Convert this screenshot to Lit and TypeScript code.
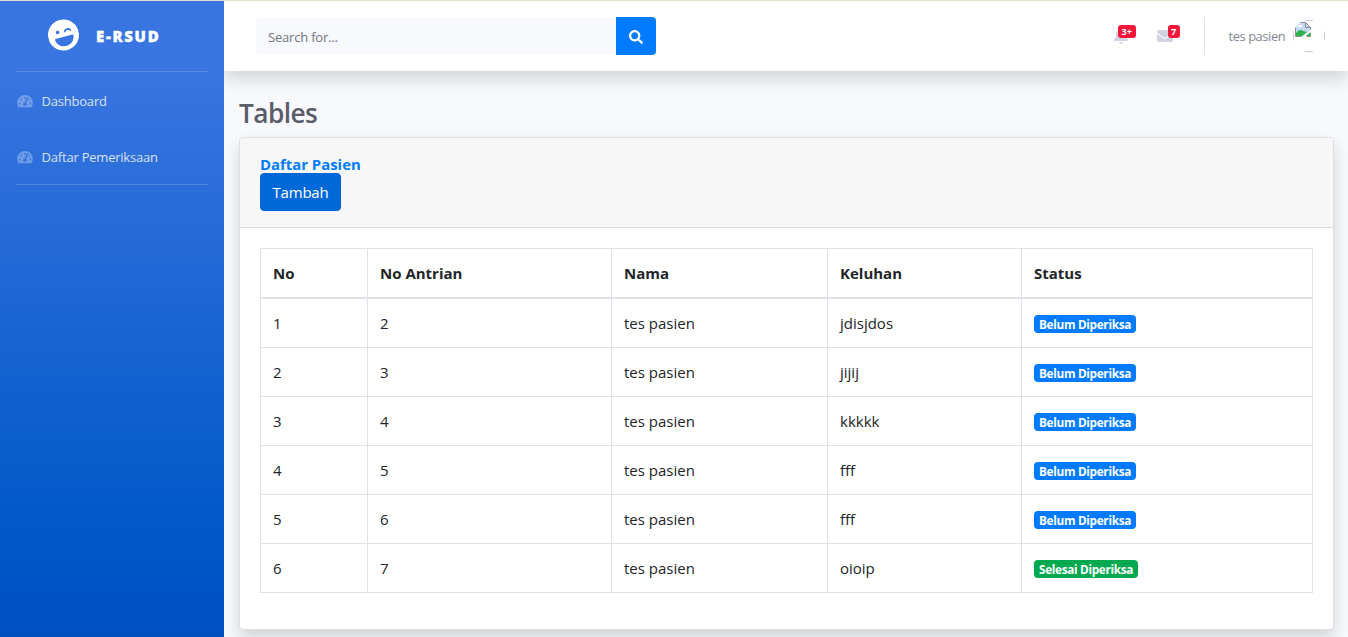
import { LitElement, html, css, svg } from "lit";
import { customElement, property } from "lit/decorators.js";
import { classMap } from "lit/directives/class-map.js";

const icons = {
  search: { box: "0 0 512 512", d: "M505 442.7L405.3 343c-4.5-4.5-10.6-7-17-7H372c27.6-35.3 44-79.7 44-128C416 93.1 322.9 0 208 0S0 93.1 0 208s93.1 208 208 208c48.3 0 92.7-16.4 128-44v16.3c0 6.4 2.5 12.5 7 17l99.7 99.7c9.4 9.4 24.6 9.4 33.9 0l28.3-28.3c9.4-9.4 9.4-24.6.1-34zM208 336c-70.7 0-128-57.2-128-128 0-70.7 57.2-128 128-128 70.7 0 128 57.2 128 128 0 70.7-57.2 128-128 128z" },
  bell: { box: "0 0 448 512", d: "M224 512c35.32 0 63.97-28.65 63.97-64H160.03c0 35.35 28.65 64 63.97 64zm215.39-149.71c-19.32-20.76-55.47-51.99-55.47-154.29 0-77.7-54.48-139.9-127.94-155.16V32c0-17.67-14.32-32-31.98-32s-31.98 14.33-31.98 32v20.84C118.56 68.1 64.08 130.3 64.08 208c0 102.3-36.15 133.53-55.47 154.29-6 6.45-8.66 14.16-8.61 21.71.11 16.4 12.98 32 32.1 32h383.8c19.12 0 32-15.6 32.1-32 .05-7.55-2.61-15.27-8.61-21.71z" },
  envelope: { box: "0 0 512 512", d: "M502.3 190.8c3.9-3.1 9.7-.2 9.7 4.7V400c0 26.5-21.5 48-48 48H48c-26.5 0-48-21.5-48-48V195.6c0-5 5.7-7.8 9.7-4.7 22.4 17.4 52.1 39.5 154.1 113.6 21.1 15.4 56.7 47.8 92.2 47.6 35.7.3 72-32.8 92.3-47.6 102-74.1 131.6-96.3 154-113.7zM256 320c23.2.4 56.6-29.2 73.4-41.4 132.7-96.3 142.8-104.7 173.4-128.7 5.8-4.5 9.2-11.5 9.2-18.9v-19c0-26.5-21.5-48-48-48H48c-26.5 0-48 21.5-48 48v19c0 7.4 3.4 14.3 9.2 18.9 30.6 23.9 40.7 32.4 173.4 128.7 16.8 12.2 50.2 41.8 73.4 41.4z" },
  gauge: { box: "0 0 576 512", d: "M288 32C128.94 32 0 160.94 0 320c0 52.8 14.25 102.26 39.06 144.8 5.61 9.62 16.3 15.2 27.44 15.2h443c11.14 0 21.83-5.58 27.44-15.2C561.75 422.26 576 372.8 576 320c0-159.06-128.94-288-288-288zm0 64c14.71 0 26.58 10.13 30.32 23.65-1.11 2.26-2.64 4.23-3.45 6.67l-9.22 27.67c-5.13 3.49-10.97 6.01-17.64 6.01-17.67 0-32-14.33-32-32S270.33 96 288 96zM96 384c-17.67 0-32-14.33-32-32s14.33-32 32-32 32 14.33 32 32-14.33 32-32 32zm48-160c-17.67 0-32-14.33-32-32s14.33-32 32-32 32 14.33 32 32-14.33 32-32 32zm246.77-72.41l-61.33 184C343.13 347.33 352 364.54 352 384c0 11.72-3.38 22.55-8.88 32H232.88c-5.5-9.45-8.88-20.28-8.88-32 0-33.94 26.5-61.43 59.9-63.59l61.34-184.01c4.17-12.56 17.73-19.45 30.36-15.17 12.57 4.19 19.35 17.79 15.17 30.36zm14.66 57.2l15.52-46.55c3.47-1.29 7.13-2.23 11.05-2.23 17.67 0 32 14.33 32 32s-14.33 32-32 32c-11.38-.01-20.89-6.28-26.57-15.22zM480 384c-17.67 0-32-14.33-32-32s14.33-32 32-32 32 14.33 32 32-14.33 32-32 32z" },
  wink: { box: "0 0 496 512", d: "M248 8C111 8 0 119 0 256s111 248 248 248 248-111 248-248S385 8 248 8zm20.1 198c4-25.2 34.2-42.1 59.9-42.1s55.9 16.9 59.9 42.1c1.7 11.1-11.4 18.3-19.8 10.8l-9.5-8.5c-14.8-13.2-46.2-13.2-61 0L288 217c-8.4 7.4-21.6.3-19.9-11zM168 164c15.5 0 28 12.5 28 28s-12.5 28-28 28-28-12.5-28-28 12.5-28 28-28zM111 286h274c9 0 16 7.6 15 16-8 72-66 134-137 134h-29c-72 0-130-62-138-134-1-8.4 6-16 15-16z" },
};

@customElement("fa-icon")
class FaIcon extends LitElement {
  @property() name: keyof typeof icons = "search";
  static styles = css`
    :host { display: block; line-height: 0; }
    .glyph { display: block; width: 100%; height: 100%; fill: currentColor; fill-rule: evenodd; }
  `;
  render() {
    const i = icons[this.name];
    return html`<svg class="glyph" viewBox=${i.box}>${svg`<path d=${i.d}></path>`}</svg>`;
  }
}

@customElement("side-bar")
class SideBar extends LitElement {
  static styles = css`
    :host { display: block; width: 224px; flex: none; background: linear-gradient(180deg, #3975e0 10%, #0057c8 85%, #0050c2 100%); color: #fff; }
    .brand { display: flex; align-items: center; height: 70px; padding-left: 48px; box-sizing: border-box; gap: 17px; }
    .face { width: 31px; height: 32px; transform: rotate(-15deg); margin-top: -2px; }
    .title { font-size: 15px; font-weight: 800; letter-spacing: 1.7px; line-height: 22px; -webkit-text-stroke: 0.35px #fff; }
    .rule { height: 1px; margin: 0 16px; background: rgba(255, 255, 255, 0.17); }
    .item { display: flex; align-items: center; gap: 8px; height: 56px; padding: 0 17px; box-sizing: border-box; font-size: 13px; color: rgba(255, 255, 255, 0.82); letter-spacing: -0.22px; }
    .items { padding: 1px 0 0; height: 112px; box-sizing: border-box; }
    .item span { margin-left: 0.6px; }
    .gauge { width: 16px; height: 14px; color: rgba(255, 255, 255, 0.3); }
  `;
  render() {
    return html`
      <div class="brand"><fa-icon class="face" name="wink"></fa-icon><span class="title">E-RSUD</span></div>
      <div class="rule"></div>
      <div class="items">
        ${["Dashboard", "Daftar Pemeriksaan"].map((t) => html`<div class="item"><fa-icon class="gauge" name="gauge"></fa-icon><span>${t}</span></div>`)}
      </div>
      <div class="rule"></div>
    `;
  }
}

@customElement("top-bar")
class TopBar extends LitElement {
  static styles = css`
    :host { display: flex; align-items: center; height: 70px; flex: none; background: #fff; box-shadow: 0 8px 16px rgba(0, 0, 0, 0.15); padding: 0 23px 0 32px; box-sizing: border-box; color: #858796; }
    .field { width: 360px; height: 38px; box-sizing: border-box; padding: 1px 12px 0; border: 0; border-radius: 4px 0 0 4px; background: #f8f9fc; display: flex; align-items: center; font-size: 13px; letter-spacing: -0.2px; color: #6e757e; }
    .go { width: 40px; height: 38px; border-radius: 0 4px 4px 0; background: #007bff; color: #fff; display: flex; align-items: center; justify-content: center; }
    .lens { width: 14px; height: 14px; margin-top: 1px; }
    .spacer { flex: 1; }
    .alert { position: relative; color: #d1d3e2; }
    .bell { width: 14px; height: 16px; margin-right: 29px; }
    .bell fa-icon { width: 14px; height: 16px; }
    .mail { width: 16px; height: 16px; margin-right: 31px; }
    .mail fa-icon { width: 16px; height: 16px; }
    .count { position: absolute; left: 4px; top: -3px; height: 13px; box-sizing: border-box; padding: 0 3.6px; border-radius: 3px; background: #f6183a; color: #fff; font-size: 9.2px; line-height: 14px; font-weight: 700; white-space: nowrap; }
    .mail .count { left: 10.5px; top: -3px; }
    .divider { width: 1px; height: 38px; background: #e0e4ef; margin-right: 23.5px; }
    .user { font-size: 12.9px; letter-spacing: -0.42px; width: 64.5px; white-space: nowrap; }
    .avatar { width: 32px; height: 32px; border-radius: 50%; overflow: hidden; }
    .frame { width: 32px; height: 32px; box-sizing: border-box; border: 1px solid #c4c4d4; padding: 0 1px; }
    .broken { display: block; width: 16px; height: 16px; }
  `;
  render() {
    return html`
      <div class="field">Search for...</div>
      <div class="go"><fa-icon class="lens" name="search"></fa-icon></div>
      <div class="spacer"></div>
      <div class="alert bell"><fa-icon name="bell"></fa-icon><span class="count">3+</span></div>
      <div class="alert mail"><fa-icon name="envelope"></fa-icon><span class="count">7</span></div>
      <div class="divider"></div>
      <span class="user">tes pasien</span>
      <div class="avatar"><div class="frame">
        <svg class="broken" viewBox="0 0 16 16">
          <path d="M.5 1.5H10.5L15.5 6.5V9L8 15.5H.5z" fill="#c3d9f7"></path>
          <path d="M1 15V12C3 9 6 8 8 10L12 11 7 15z" fill="#2bb24a"></path>
          <ellipse cx="5" cy="5" rx="2.2" ry="1.2" fill="#fff"></ellipse>
          <path d="M11 15L15 11.5V15z" fill="#2bb24a"></path>
          <path d="M6.5 15.5H.5V1.5H10.5L15.5 6.5V8.5M10.5 1.5V6.5H15.5M15.5 11.5V15.5H11.5" fill="none" stroke="#8c8f94"></path>
        </svg>
      </div></div>
    `;
  }
}

interface Visit { no: number; queue: number; name: string; complaint: string; done: boolean; }

@customElement("patient-table")
class PatientTable extends LitElement {
  private rows: Visit[] = ["jdisjdos", "jijij", "kkkkk", "fff", "fff", "oioip"].map((complaint, i) => ({
    no: i + 1, queue: i + 2, name: "tes pasien", complaint, done: i === 5,
  }));
  static styles = css`
    :host { display: block; color: #212529; border: 1px solid #dee2e6; border-bottom: 0; font-size: 15px; }
    .row { display: grid; grid-template-columns: 107px 244px 216px 194px 1fr; height: 49px; box-sizing: border-box; border-bottom: 1px solid #dee2e6; }
    .head { height: 50px; border-bottom-width: 2px; font-weight: 700; font-size: 15px; letter-spacing: 0; }
    .cell { display: flex; align-items: center; padding: 0 12px; border-right: 1px solid #dee2e6; white-space: nowrap; }
    .cell:last-child { border-right: 0; }
    .pill { height: 18px; box-sizing: border-box; padding: 0 5px; margin-top: 2px; border-radius: 4px; background: #007bff; color: #fff; font-weight: 700; font-size: 11.8px; letter-spacing: -0.33px; line-height: 19px; }
    .done { background: #00a94f; }
  `;
  render() {
    return html`
      <div class="row head">${["No", "No Antrian", "Nama", "Keluhan", "Status"].map((h) => html`<div class="cell">${h}</div>`)}</div>
      ${this.rows.map((r) => html`<div class="row">
        <div class="cell">${r.no}</div><div class="cell">${r.queue}</div><div class="cell">${r.name}</div><div class="cell">${r.complaint}</div>
        <div class="cell"><span class=${classMap({ pill: true, done: r.done })}>${r.done ? "Selesai Diperiksa" : "Belum Diperiksa"}</span></div>
      </div>`)}
    `;
  }
}

@customElement("app-root")
class AppRoot extends LitElement {
  static styles = css`
    :host { display: flex; height: 637px; box-sizing: border-box; border-top: 1px solid #e8e0cf; overflow: hidden; background: #f8f9fc; font-family: "Open Sans", "Noto Sans", sans-serif; }
    .main { flex: 1; min-width: 0; display: flex; flex-direction: column; overflow: hidden; }
    .content { padding: 26px 14px 0 15px; }
    .heading { margin: 0 0 7px; font-size: 26.3px; line-height: 33px; letter-spacing: -0.6px; font-weight: 600; color: #5a5c69; }
    .card { height: 493px; box-sizing: border-box; border: 1px solid #dddfe2; border-radius: 4px; background: #fff; box-shadow: 0 8px 16px rgba(0, 0, 0, 0.15); overflow: hidden; }
    .card-head { height: 90px; box-sizing: border-box; padding: 17px 20px 0; background: #f7f7f7; border-bottom: 1px solid #d9dbdd; }
    .subtitle { margin: 0; font-size: 14.9px; line-height: 18px; font-weight: 700; color: #007bff; }
    .add { display: block; width: 81px; height: 38px; padding: 0; border: 1px solid #0062cc; border-radius: 4px; background: #0069d9; color: #fff; font: 400 15px/36px "Open Sans", sans-serif; letter-spacing: -0.2px; text-align: center; }
    .card-body { padding: 20px; }
  `;
  render() {
    return html`
      <side-bar></side-bar>
      <div class="main">
        <top-bar></top-bar>
        <div class="content">
          <h1 class="heading">Tables</h1>
          <div class="card">
            <div class="card-head"><h6 class="subtitle">Daftar Pasien</h6><button class="add">Tambah</button></div>
            <div class="card-body"><patient-table></patient-table></div>
          </div>
        </div>
      </div>
    `;
  }
}
